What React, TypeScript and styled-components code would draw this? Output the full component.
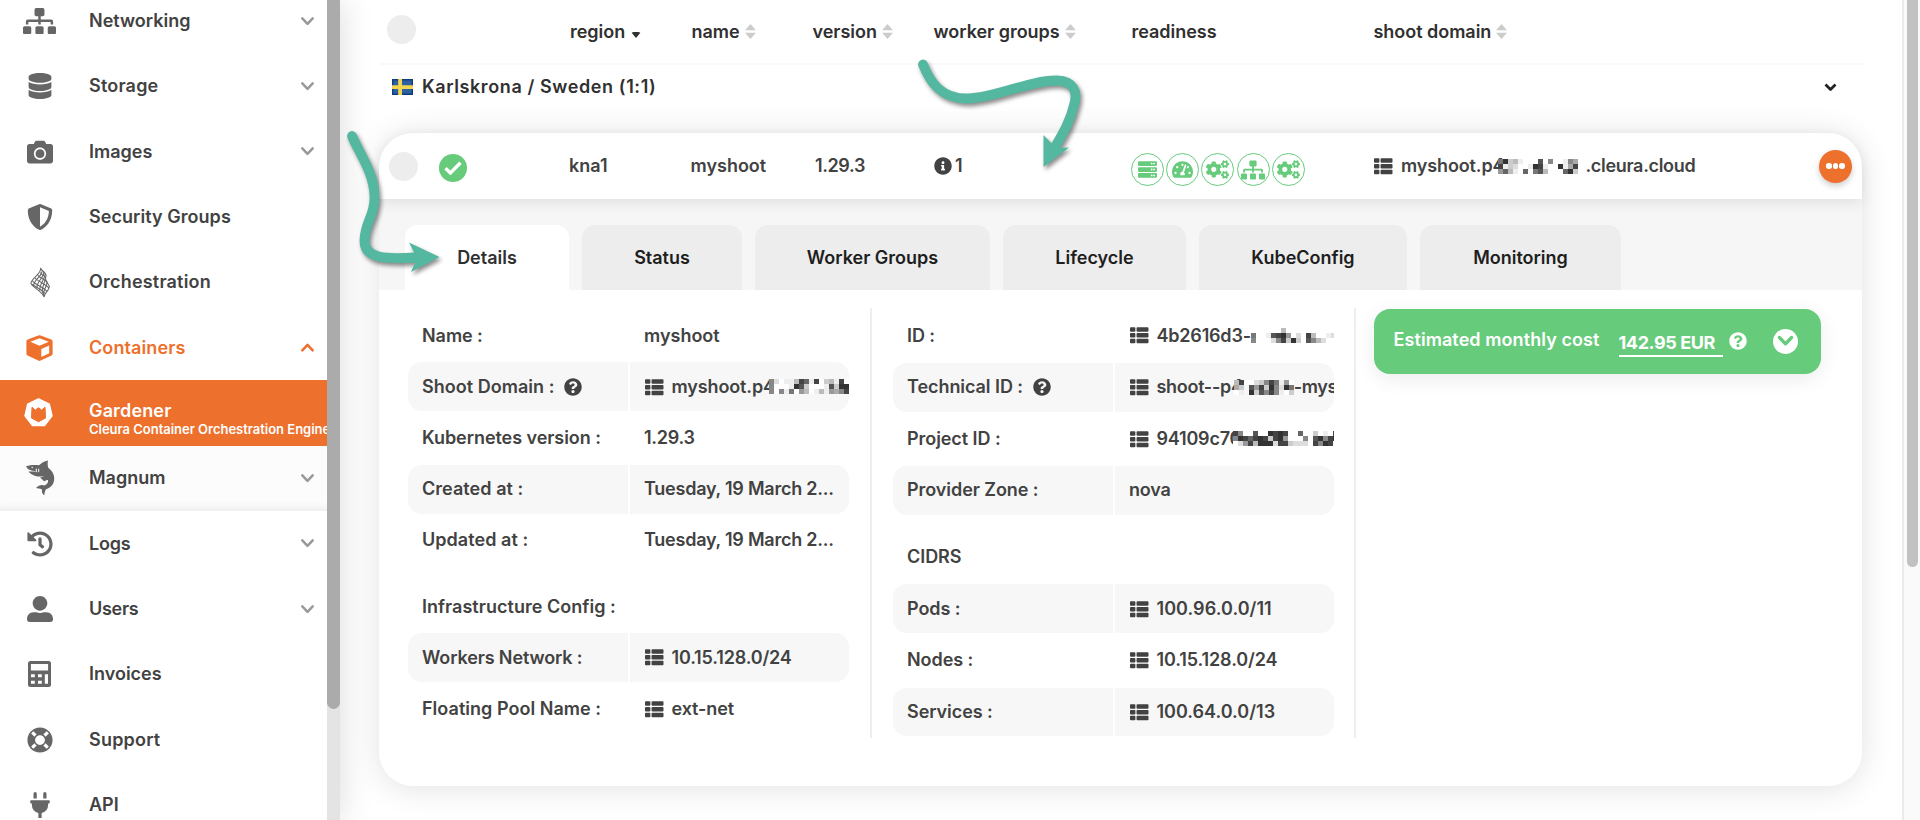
import React from "react";
import styled, { createGlobalStyle, css } from "styled-components";
import {
  FaSitemap, FaDatabase, FaCamera, FaShieldAlt, FaHistory, FaUserAlt, FaLifeRing, FaPlug,
  FaThList, FaServer, FaTachometerAlt, FaCogs, FaInfoCircle, FaQuestionCircle,
} from "react-icons/fa";

const Global = createGlobalStyle`
  * { box-sizing: border-box; }
  html, body { margin: 0; height: 820px; overflow: hidden; background: #fff; }
  body { font: 600 18px/24px Inter, "Liberation Sans", sans-serif; color: #424242; }
  svg { display: block; flex: none; }
`;

const Page = styled.div`display: flex; width: 1920px; height: 820px; overflow: hidden; position: relative;`;

/* ---------- sidebar ---------- */
const Sidebar = styled.aside`
  display: flex; width: 340px; flex: none; height: 820px; background: #fff;
  box-shadow: 2px 0 30px rgba(0, 0, 0, 0.13); overflow: visible;
`;
const Menu = styled.nav`width: 327px; height: 820px; overflow: hidden;`;
const MenuList = styled.div`margin-top: -11.600px;`;
const ScrollTrack = styled.div`width: 13px; background: #e4e4e4; height: 820px;`;
const ScrollThumb = styled.div`height: 709px; background: #ababab; border-radius: 0 0 6.5px 6.5px;`;

type Tone = "plain" | "open" | "active" | "sub";
const MenuItem = styled.div<{ $tone: Tone }>`
  display: flex; align-items: center; height: 65.33px; padding-right: 13.500px; white-space: nowrap;
  color: ${(p) => (p.$tone === "open" ? "#ed702d" : p.$tone === "active" ? "#fff" : "#424242")};
  ${(p) => p.$tone === "active" && css`background: #ed702d;`}
  ${(p) => p.$tone === "sub" && css`background: #fcfcfc; box-shadow: inset 0 -9px 9px -7px rgba(0, 0, 0, 0.08);`}
`;
const MenuIcon = styled.div<{ $tone: Tone }>`
  width: 79px; display: flex; justify-content: center; flex: none; margin-right: 10px;
  ${(p) => p.$tone === "active" && css`padding: 0 2px 1px 0;`}
  color: ${(p) => (p.$tone === "open" ? "#ed702d" : p.$tone === "active" ? "#fff" : "#666")};
`;
const MenuText = styled.div<{ $two?: boolean }>`flex: 1; min-width: 0; padding-top: ${(p) => (p.$two ? 10 : 0)}px;`;
const MenuTitle = styled.div<{ $s?: number }>`letter-spacing: ${(p) => p.$s ?? 0}px;`;
const MenuSub = styled.div`font-size: 13px; line-height: 17px; margin-top: -2px; letter-spacing: -0.02px;`;

const Chevron = ({ up, color = "#999" }: { up?: boolean; color?: string }) => (
  <svg width="13" height="9" viewBox="0 0 13 9" fill="none" stroke={color} strokeWidth="2.5" strokeLinecap="round" strokeLinejoin="round">
    <path d={up ? "M1.3 7.4 6.5 1.9 11.7 7.4" : "M1.3 1.4 6.5 6.9 11.7 1.4"} />
  </svg>
);

const HelixIcon = () => (
  <svg width="20" height="33" viewBox="0 0 22 33" fill="none" stroke="#666" strokeWidth="1.15">
    <path d="M11.500.6C14 6 1 12 1 17.500 3 22 13 26 15.500 32.400 15 29 21.200 25.500 21.200 20.500 20 17 15 15 17.800 8.500 17.500 5 13 4 11.500.6Z" />
    <path d="M13.200 2.600C15.500 8 3.500 14 4 20M15 4.300C17 10 6.500 15.500 7.500 22.800M16.600 6C17.500 12 10 17 10.800 25.600M16.800 12C16.500 17 12.500 21 13.500 28.800M19 16C18.500 21 14 25 15 30.600" />
    <path d="M11.500 5.500C13 8.500 16 9 17.300 11M8.500 8.500C11 12 16 12.500 19 16M5.300 11.300C8 15 17 18 20.700 22.500M2.600 14.200C5 19 14 21 18.300 26M1.500 18C6 21.500 12 23 16.500 28.500" />
  </svg>
);
const BoxIcon = () => (
  <svg width="27" height="26" viewBox="0 0 27 26">
    <path fill="currentColor" fillRule="evenodd" d="M12.300.4a3 3 0 0 1 2.400 0l10.600 4.100A2 2 0 0 1 26.600 6.400v12.300a2 2 0 0 1-1.100 1.800l-10.800 5.100a2.700 2.700 0 0 1-2.400 0L1.500 20.500a2 2 0 0 1-1.100-1.800V6.400a2 2 0 0 1 1.300-1.900ZM13.500 3.200 4.300 6.800l9.200 4 9.200-4ZM15.300 14v8l7.900-3.800v-7.700Z" />
  </svg>
);
const GardenerIcon = () => (
  <svg width="29" height="29" viewBox="0 0 29 29">
    <path fill="#fff" stroke="#fff" strokeWidth="1.500" strokeLinejoin="round" d="M14.500 1 25.300 6.100 28 17.800 20.500 27.600H8.500L1 17.800 3.700 6.100Z" />
    <path fill="#ed702d" stroke="#ed702d" strokeLinejoin="round" d="M8 9.200 11.200 12.200 14.500 9.700 17.800 12.200 21 9.200 21.500 20 14.500 23.700 7.500 20Z" />
  </svg>
);
const SharkIcon = () => (
  <svg width="30" height="36" viewBox="0 0 30 36">
    <path fill="#666" d="M1 6.300C5 4.800 10 5 14 5.200 16.500 3.300 19 1 23 .5 22.400 3 22.600 6 23.400 8 28 11.500 30 16 29 21 28 25.500 25 28 21 29.200 19.800 31 19.600 33 19.300 35.300 16.500 33.500 17 31 17 29.500 14.500 28.200 12.500 28.600 11 28 13.500 25 17 24.300 19.500 25.600 22 24.500 23.600 22.500 23 20 21.600 20 20.500 20.500 19 21.500 18 19.500 16 18.700 15 17.500 16.500 17.300 18 17 19 16.200 12 17.500 6 15 3.500 11.500 6 11.500 9.500 11.700 12.500 11 8 11 3 11 1 6.300Z" />
    <path stroke="#fff" strokeWidth="1" d="M11.300 8.700v3.500M13.700 8.700v3.500" />
    <circle cx="7.200" cy="7.500" r=".7" fill="#fff" />
  </svg>
);
const CalculatorIcon = () => (
  <svg width="23" height="26" viewBox="0 0 23 26">
    <path fill="#666" fillRule="evenodd" d="M2.500 0h18A2.500 2.500 0 0 1 23 2.500v21a2.500 2.500 0 0 1-2.500 2.500h-18A2.500 2.500 0 0 1 0 23.500v-21A2.500 2.500 0 0 1 2.500 0ZM2.900 3v6.600h17.200V3ZM3 13.200v3h3.800v-3ZM10 13.200v3h3.800v-3ZM3 19.800v3h3.800v-3ZM10 19.800v3h3.800v-3ZM16.800 13.200v9.600h3.200v-9.600Z" />
  </svg>
);

/* ---------- main ---------- */
const Main = styled.main`
  flex: 1; height: 820px; padding-left: 39px; padding-right: 40px; display: flex; flex-direction: column; overflow: hidden;
`;
const PageScroll = styled.div`width: 18px; height: 820px; background: #fafafa; border-left: 2px solid #ebebeb; padding-left: 2.500px; flex: none;`;
const PageThumb = styled.div`width: 11px; height: 567px; background: #c1c1c1; border-radius: 0 0 6px 6px;`;

const Columns = styled.div`
  display: grid; align-items: center; white-space: nowrap;
  grid-template-columns: 190px 121.5px 121px 121px 198px 242px 1fr;
`;
const HeadRow = styled(Columns)`height: 65px; color: #303030; border-bottom: 2px solid #f9f9f9;`;
const HeadCell = styled.div<{ $gap?: number }>`
  display: flex; align-items: center; gap: ${(p) => p.$gap ?? 5}px; padding-left: 1px; letter-spacing: -0.03px;
`;
const Selector = styled.div`width: 29px; height: 29px; border-radius: 50%; background: #ededed;`;
const SelectCell = styled.div<{ $pad: number; $up?: number }>`
  display: flex; align-items: center; padding-left: ${(p) => p.$pad}px; padding-bottom: ${(p) => p.$up ?? 0}px; gap: 21px;
`;
const Sort = () => (
  <svg width="11" height="15" viewBox="0 0 11 15" fill="#ccc"><path d="M5.500 0 11 6.300H0ZM5.500 15 0 8.700H11Z" /></svg>
);
const SortActive = styled.span`
  border: 5.500px solid transparent; border-top: 6.500px solid #303030; border-bottom: 0; margin-top: 6px; border-radius: 3px;
`;

const GroupRow = styled.div`display: flex; align-items: center; height: 46px; padding: 0 25px 1.500px 13px; color: #303030;`;
const GroupName = styled.div`margin-left: 9px; letter-spacing: 0.6px; flex: 1;`;
const Flag = () => (
  <svg width="21" height="16" viewBox="0 0 21 16">
    <rect width="21" height="16" fill="#2d62a0" /><path fill="none" stroke="#123d7c" strokeWidth="1.500" d="M.700.700h19.600v14.600H.700Z" />
    <path fill="#f3d64d" d="M6.200 0h3.800v16H6.200ZM0 6.200h21v3.800H0Z" />
  </svg>
);

const Card = styled.section`
  margin-top: 22px; height: 653px; border-radius: 34px; box-shadow: 0 2px 32px rgba(0, 0, 0, 0.12); background: #fff;
  display: flex; flex-direction: column; flex: none;
`;
const ShootRow = styled(Columns)`
  height: 66px; background: #fff; border-radius: 34px 34px 0 0; box-shadow: 0 4px 14px rgba(0, 0, 0, 0.09); position: relative;
`;
const Cell = styled.div<{ $pad?: number; $s?: number }>`
  display: flex; align-items: center; padding-left: ${(p) => p.$pad ?? 0}px; letter-spacing: ${(p) => p.$s ?? 0}px;
`;
const DomainText = styled.span`margin-left: 8.500px; letter-spacing: -0.12px;`;
const DomainTail = styled.span`margin-left: 7px; letter-spacing: -0.320px;`;
const Status = styled.div`
  width: 28px; height: 28px; border-radius: 50%; background: #67cb7c; display: flex; align-items: center; justify-content: center; margin-top: 4px;
`;
const Readiness = styled.div`display: flex; gap: 2.400px; margin-top: 7px; color: #67cb7c;`;
const Ring = styled.div`
  width: 33px; height: 33px; border: 1.600px solid #67cb7c; border-radius: 50%; display: flex; align-items: center; justify-content: center;
`;
const MoreButton = styled.button`
  width: 33px; height: 33px; border: 0; padding: 0; border-radius: 50%; background: #ed702d; margin-left: auto; margin-right: 10px;
  display: flex; align-items: center; justify-content: center; gap: 1.200px; box-shadow: 0 3px 6px rgba(0, 0, 0, 0.2);
`;
const Dot = styled.span`width: 5.400px; height: 5.400px; border-radius: 50%; background: #fff;`;

const TabBar = styled.div`display: flex; align-items: flex-end; height: 91px; background: #f6f6f6; padding-left: 26px; gap: 13px; color: #1e1e1e; flex: none;`;
const Tab = styled.div<{ $w: number; $on?: boolean }>`
  width: ${(p) => p.$w}px; height: 65px; border-radius: 13px 13px 0 0; background: ${(p) => (p.$on ? "#fff" : "#ededed")};
  color: ${(p) => (p.$on ? "#303030" : "#1e1e1e")};
  display: flex; align-items: center; justify-content: center;
`;

const Body = styled.div`display: flex; padding: 18px 41px 0 29px; align-items: flex-start;`;
const Panel = styled.div<{ $w: number; $pad: number; $pitch: number }>`
  width: ${(p) => p.$w}px; height: 430px; flex: none; padding-top: 3.300px; padding-left: ${(p) => p.$pad}px; border-right: 2px solid #eee;
  display: flex; flex-direction: column; gap: ${(p) => p.$pitch - 48.800}px;
`;
const Field = styled.div<{ $gap?: boolean }>`
  display: flex; gap: 2.500px; height: 48.800px; flex: none; white-space: nowrap; margin-top: ${(p) => (p.$gap ? 15.200 : 0)}px;
`;
const Label = styled.div<{ $fill?: boolean; $wide?: boolean; $s?: number }>`
  width: ${(p) => (p.$wide ? 440 : 219.500)}px; padding-left: 14px; display: flex; align-items: center; gap: 9.500px;
  letter-spacing: ${(p) => p.$s ?? -0.06}px;
  border-radius: 14px 0 0 14px; background: ${(p) => (p.$fill ? "#f7f7f7" : "transparent")};
`;
const Value = styled.div<{ $fill?: boolean; $s?: number }>`
  width: 219px; padding-left: 14px; display: flex; align-items: center; overflow: hidden; letter-spacing: ${(p) => p.$s ?? 0}px;
  border-radius: 0 14px 14px 0; background: ${(p) => (p.$fill ? "#f7f7f7" : "transparent")};
`;
const ListSlot = styled.span`margin-left: 1px;`;
const ValueText = styled.span`margin-left: 8px; flex: none;`;

const CostCard = styled.div`
  margin-left: 17.500px; width: 447px; height: 65px; border-radius: 16px; background: #67cb7c; color: #fff; margin-top: 0.500px;
  box-shadow: 0 5px 20px rgba(0, 0, 0, 0.08); display: flex; align-items: center; padding-left: 20px; white-space: nowrap;
`;
const CostLabel = styled.span`margin-bottom: 3px; width: 225px; letter-spacing: 0.08px;`;
const Price = styled.span`
  width: 104px; height: 26px; border-bottom: 2px solid #fff; margin-top: 5px; letter-spacing: -0.400px; margin-right: 6.500px; font-weight: 700;
`;
const CostToggle = styled.div`
  width: 25px; height: 25px; border-radius: 50%; background: #fff; display: flex; align-items: center; justify-content: center; margin-left: 25.500px;
`;

/* Pixelated block hiding a private value: each hex digit is a grey level. */
const MosaicBox = styled.svg<{ $left: number }>`margin-left: ${(p) => p.$left}px;`;
const Mosaic = ({ rows, left = 0 }: { rows: string[]; left?: number }) => (
  <MosaicBox $left={left} width={rows[0].length * 5} height={rows.length * 5} shapeRendering="crispEdges">
    {rows.flatMap((r, y) =>
      r.split("").map((c, x) => (c === "." ? null : <rect key={`${x}-${y}`} x={x * 5} y={y * 5} width="5" height="5" fill={`#${c}${c}${c}`} />)),
    )}
  </MosaicBox>
);

const Annotations = styled.svg`position: absolute; left: 0; top: 0; pointer-events: none; filter: drop-shadow(2px 3px 2px rgba(0, 0, 0, 0.45));`;

const ListIcon = () => <FaThList size={18.5} color="#424242" />;

type Item = { label: string; sub?: string; icon: React.ReactNode; tone?: Tone; chevron?: boolean; s?: number };
const items: Item[] = [
  { label: "Networking", icon: <FaSitemap style={{ width: 33, height: 26.4 }} />, chevron: true },
  { label: "Storage", icon: <FaDatabase size={26} />, chevron: true, s: 0.2 },
  { label: "Images", icon: <FaCamera size={26} />, chevron: true },
  { label: "Security Groups", icon: <FaShieldAlt size={26} />, s: 0.05 },
  { label: "Orchestration", icon: <HelixIcon />, s: 0.2 },
  { label: "Containers", icon: <BoxIcon />, tone: "open", chevron: true, s: 0.1 },
  { label: "Gardener", sub: "Cleura Container Orchestration Engine", icon: <GardenerIcon />, tone: "active", s: 0.15 },
  { label: "Magnum", icon: <SharkIcon />, tone: "sub", chevron: true },
  { label: "Logs", icon: <FaHistory size={26} />, chevron: true, s: -0.2 },
  { label: "Users", icon: <FaUserAlt size={26} />, chevron: true, s: -0.3 },
  { label: "Invoices", icon: <CalculatorIcon /> },
  { label: "Support", icon: <FaLifeRing size={26} />, s: 0.2 },
  { label: "API", icon: <FaPlug size={26} /> },
];

type Row = { label: string; ls?: number; help?: boolean; list?: boolean; value?: React.ReactNode; fill?: boolean; gap?: boolean; s?: number };
const general: Row[] = [
  { label: "Name :", value: "myshoot" },
  { label: "Shoot Domain :", ls: 0.03, help: true, list: true, fill: true, s: -0.12, value: <><ValueText>myshoot.p4</ValueText><Mosaic left={-6} rows={["8dfeeb46e4fcbe4f", "8fffe35cfffe5c33", "8f8e7f9bfebe9a84"]} /></> },
  { label: "Kubernetes version :", value: "1.29.3", s: -0.3 },
  { label: "Created at :", ls: 0.05, value: "Tuesday, 19 March 2...", fill: true, s: -0.24 },
  { label: "Updated at :", ls: 0.05, value: "Tuesday, 19 March 2...", s: -0.24 },
  { label: "Infrastructure Config :", ls: 0.03, gap: true },
  { label: "Workers Network :", ls: -0.13, list: true, value: <ValueText>10.15.128.0/24</ValueText>, fill: true, s: -0.17 },
  { label: "Floating Pool Name :", ls: 0.03, list: true, value: <ValueText>ext-net</ValueText>, s: -0.1 },
];
const identifiers: Row[] = [
  { label: "ID :", list: true, s: -0.2, value: <><ValueText>4b2616d3-</ValueText><Mosaic rows={["......b..........", "7.fe5439.d.4bffed", "8.ffd84c3cf58bd.."]} left={0} /></> },
  { label: "Technical ID :", help: true, list: true, fill: true, s: -0.3, value: <><ValueText>shoot--p4</ValueText><Mosaic left={-9} rows={["b4ffdc847e9f", "ac.594c38d37", "fe.3c5848efc"]} /><span>-myshoot</span></> },
  { label: "Project ID :", list: true, s: -0.2, value: <><ValueText>94109c70</ValueText><Mosaic left={-8} rows={["48ff5ff3434f.6.fcfef4f", "8346434c439fff8.538434", "fd94b333d44cdddf4834fd"]} /></> },
  { label: "Provider Zone :", value: "nova", fill: true, s: -0.2 },
  { label: "CIDRS", gap: true },
  { label: "Pods :", list: true, value: <ValueText>100.96.0.0/11</ValueText>, fill: true, s: 0.05 },
  { label: "Nodes :", list: true, value: <ValueText>10.15.128.0/24</ValueText>, s: -0.12 },
  { label: "Services :", list: true, value: <ValueText>100.64.0.0/13</ValueText>, fill: true },
];

const Fields = ({ rows }: { rows: Row[] }) => (
  <>
    {rows.map((r) => (
      <Field key={r.label} $gap={r.gap}>
        <Label $fill={r.fill} $wide={!r.value} $s={r.ls}>
          <span>{r.label}</span>
          {r.help && <FaQuestionCircle size={18} />}
        </Label>
        {r.value && (
          <Value $fill={r.fill} $s={r.s}>
            {r.list && <ListSlot><ListIcon /></ListSlot>}
            {r.value}
          </Value>
        )}
      </Field>
    ))}
  </>
);

export default function App() {
  return (
    <Page>
      <Global />
      <Sidebar>
        <Menu>
          <MenuList>
            {items.map(({ label, sub, icon, tone = "plain", chevron, s }) => (
              <MenuItem key={label} $tone={tone}>
                <MenuIcon $tone={tone}>{icon}</MenuIcon>
                <MenuText $two={!!sub}>
                  <MenuTitle $s={s}>{label}</MenuTitle>
                  {sub && <MenuSub>{sub}</MenuSub>}
                </MenuText>
                {chevron && <Chevron up={tone === "open"} color={tone === "open" ? "#ed702d" : "#999"} />}
              </MenuItem>
            ))}
          </MenuList>
        </Menu>
        <ScrollTrack><ScrollThumb /></ScrollTrack>
      </Sidebar>

      <Main>
        <HeadRow>
          <SelectCell $pad={8} $up={4}><Selector /></SelectCell>
          <HeadCell $gap={6}>region<SortActive /></HeadCell>
          <HeadCell>name<Sort /></HeadCell>
          <HeadCell>version<Sort /></HeadCell>
          <HeadCell>worker groups<Sort /></HeadCell>
          <HeadCell>readiness</HeadCell>
          <HeadCell>shoot domain<Sort /></HeadCell>
        </HeadRow>
        <GroupRow>
          <Flag />
          <GroupName>Karlskrona / Sweden (1:1)</GroupName>
          <svg width="13" height="9" viewBox="0 0 13 9" fill="none" stroke="#222" strokeWidth="2.800" strokeLinejoin="round"><path d="M1.500 1.500 6.500 6.500 11.500 1.500" /></svg>
        </GroupRow>

        <Card>
          <ShootRow>
            <SelectCell $pad={10}>
              <Selector />
              <Status>
                <svg width="18" height="14" viewBox="0 0 18 14" fill="none" stroke="#fff" strokeWidth="3.400"><path d="M1.500 7.200 6.400 12 16.500 1.700" /></svg>
              </Status>
            </SelectCell>
            <Cell>kna1</Cell>
            <Cell>myshoot</Cell>
            <Cell $pad={3.5} $s={-0.4}>1.29.3</Cell>
            <Cell $pad={1.5}><FaInfoCircle size={18} /><span>&thinsp;1</span></Cell>
            <Cell>
              <Readiness>
                <Ring><FaServer size={19} /></Ring>
                <Ring><FaTachometerAlt size={21} /></Ring>
                <Ring><FaCogs size={23} /></Ring>
                <Ring><FaSitemap size={24} /></Ring>
                <Ring><FaCogs size={23} /></Ring>
              </Readiness>
            </Cell>
            <Cell $pad={1.5}>
              <ListIcon />
              <DomainText>myshoot.p4</DomainText>
              <Mosaic left={-6} rows={["73cbeff.5f8..e8a", "4ecd..e34e..3ea4", "96be.6.75b..f63c"]} />
              <DomainTail>.cleura.cloud</DomainTail>
              <MoreButton aria-label="More"><Dot /><Dot /><Dot /></MoreButton>
            </Cell>
          </ShootRow>
          <TabBar>
            <Tab $w={164} $on>Details</Tab>
            <Tab $w={160}>Status</Tab>
            <Tab $w={235}>Worker Groups</Tab>
            <Tab $w={183}>Lifecycle</Tab>
            <Tab $w={208}>KubeConfig</Tab>
            <Tab $w={201}>Monitoring</Tab>
          </TabBar>
          <Body>
            <Panel $w={464} $pad={0} $pitch={51.15}><Fields rows={general} /></Panel>
            <Panel $w={484} $pad={21} $pitch={51.6}><Fields rows={identifiers} /></Panel>
            <CostCard>
              <CostLabel>Estimated monthly cost</CostLabel>
              <Price>142.95 EUR</Price>
              <FaQuestionCircle size={18} />
              <CostToggle>
                <svg width="17" height="12" viewBox="0 0 17 12" fill="none" stroke="#67cb7c" strokeWidth="3.400" strokeLinecap="round" strokeLinejoin="round"><path d="M2.500 2.500 8.500 8.800 14.500 2.500" /></svg>
              </CostToggle>
            </CostCard>
          </Body>
        </Card>
      </Main>
      <PageScroll><PageThumb /></PageScroll>

      <Annotations width="1920" height="820" viewBox="0 0 1920 820">
        <g fill="none" stroke="#54b79f" strokeWidth="9.800" strokeLinecap="round">
          <path d="M352 136C360 155 374 172 374.500 197 375 215 365 222 364.500 240 364 260 388 259 415 257.500" />
          <path d="M923 64.500C930 82 941 99 968 98.500 995 98 1030 80 1057 80.500 1074 81 1078 92 1074 105 1070 122 1062 135 1055 147" />
        </g>
        <path fill="#54b79f" d="M409 242.500 439.500 257 411 272 417 258ZM1043.500 135 1043.500 167 1069 147.500 1056 148Z" />
      </Annotations>
    </Page>
  );
}
